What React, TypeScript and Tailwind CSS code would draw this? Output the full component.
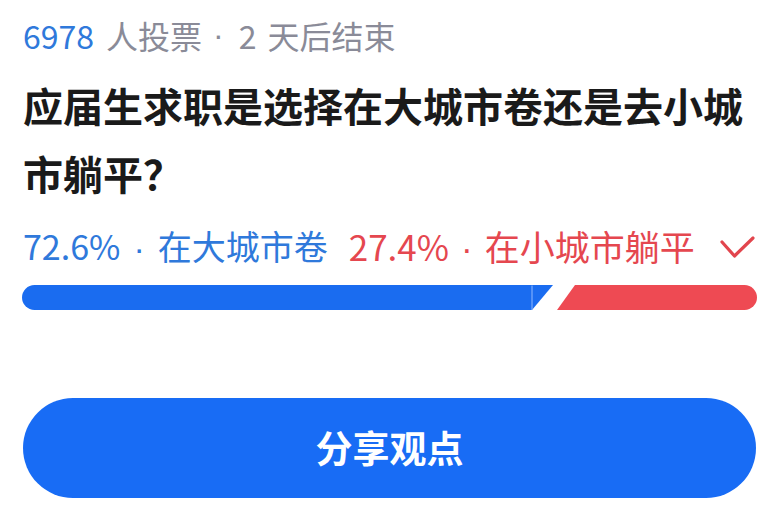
const font = { fontFamily: '"Noto Sans CJK SC", "Noto Sans", sans-serif' };

function Dot({ className }: { className: string }) {
  return <span className={"font-['Liberation_Sans'] " + className}>·</span>;
}

function VoteBar() {
  return (
    <svg width="735" height="25" viewBox="0 0 735 25" className="block">
      <path d="M12.5 0 H531 L510 25 H12.5 A12.5 12.5 0 0 1 12.5 0 Z" fill="#1a6cf0" />
      <line x1="510" y1="0.5" x2="510" y2="25" stroke="#8fb8ff" strokeWidth="1" />
      <path d="M553 0 H722.5 A12.5 12.5 0 0 1 722.5 25 H535 Z" fill="#ee4a53" />
    </svg>
  );
}

function Check() {
  return (
    <svg width="38" height="26" viewBox="0 0 38 26" fill="none" className="block">
      <path d="M4 7 L16.5 21 L35 3" stroke="#e2454d" strokeWidth="3.2" strokeLinecap="round" strokeLinejoin="round" />
    </svg>
  );
}

export default function App() {
  return (
    <div className="h-[508px] w-[784px] overflow-hidden bg-white" style={font}>
      <div className="flex flex-col pl-[23px] pr-[28px]">
        <div className="mt-[15px] flex h-[40px] items-center text-[32px] leading-[40px] text-[#8a8b98]">
          <span className="text-[#2f79db]">6978</span>
          <span className="ml-[12px]">人投票</span>
          <Dot className="ml-[11px] mr-[15px]" />
          <span>2</span>
          <span className="ml-[11px]">天后结束</span>
        </div>
        <div className="mt-[16px] text-[40px] font-bold leading-[68px] text-[#1a1a1a]">
          应届生求职是选择在大城市卷还是去小城市躺平？
        </div>
        <div className="mt-[20px] flex h-[40px] items-center text-[34px] leading-[40px]">
          <span className="text-[#2f79db]">
            72.6%
            <Dot className="mx-[13px]" />
            在大城市卷
          </span>
          <span className="ml-[21px] text-[35px] text-[#e5474f]">
            27.4%
            <Dot className="mx-[12px]" />
            在小城市躺平
          </span>
          <span className="ml-auto mt-[2px]">
            <Check />
          </span>
        </div>
        <div className="mt-[18px] -ml-px">
          <VoteBar />
        </div>
        <button className="mt-[88px] flex h-[100px] w-[733px] items-center justify-center rounded-full bg-[#186cf5] text-[37px] font-bold text-white">
          分享观点
        </button>
      </div>
    </div>
  );
}
